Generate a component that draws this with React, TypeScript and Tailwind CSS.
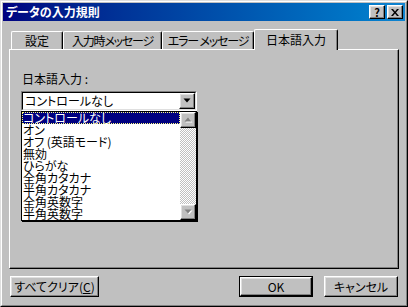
const font = "[font-family:'Noto_Sans_CJK_JP','Noto_Sans',sans-serif] [font-feature-settings:'palt']"

const items = ['コントロールなし', 'オン', 'オフ (英語モード)', '無効', 'ひらがな', '全角カタカナ', '半角カタカナ', '全角英数字', '半角英数字']

const raised = 'border border-t-white border-l-white border-r-black border-b-black shadow-[inset_-1px_-1px_#808080,inset_1px_1px_#dfdfdf]'

function Arrow({ dir, disabled }: { dir: 'up' | 'down'; disabled?: boolean }) {
  const pts = dir === 'down' ? '0,0 7,0 3.5,4' : '3.5,0 7,4 0,4'
  return (
    <svg width="9" height="6" viewBox="0 0 9 6">
      {disabled && <polygon points={pts} transform="translate(1.5,1.5)" fill="#ffffff" />}
      <polygon points={pts} transform="translate(0.5,0.5)" fill={disabled ? '#808080' : '#000000'} />
    </svg>
  )
}

function Tab({ label, w, active, tight }: { label: string; w: string; active?: boolean; tight?: boolean }) {
  const track = tight ? 'tracking-[-1.2px]' : ''
  if (active) {
    return (
      <div className={`${w} ${track} relative z-10 -mb-[1px] -mx-[2px] h-[21px] pt-[2px] text-center whitespace-nowrap bg-[#c0c0c0] border-t border-l border-r border-t-white border-l-white border-r-black shadow-[inset_-1px_0_#808080] rounded-t-[2px] text-[12px] leading-[16px] text-black`}>
        {label}
      </div>
    )
  }
  return (
    <div className={`${w} ${track} h-[18px] pt-[1px] text-center whitespace-nowrap border-t border-l border-r border-t-white border-l-white border-r-black shadow-[inset_-1px_0_#808080] rounded-t-[2px] text-[12px] leading-[16px] text-black`}>
      {label}
    </div>
  )
}

function Button({ children, w, def }: { children: React.ReactNode; w: string; def?: boolean }) {
  return (
    <div className={`${w} h-[21px] ${def ? 'border border-black' : ''}`}>
      <div className={`${raised} h-full w-full flex items-center justify-center text-[12px] leading-[14px] text-black bg-[#c0c0c0]`}>
        {children}
      </div>
    </div>
  )
}

export default function App() {
  return (
    <div className={`${font} w-[408px] h-[307px] bg-[#c0c0c0] border border-t-[#dfdfdf] border-l-[#dfdfdf] border-r-black border-b-black`}>
      <div className="h-full border border-t-white border-l-white border-r-[#808080] border-b-[#808080] p-[1px] flex flex-col">
        {/* title bar */}
        <div className="h-[18px] flex items-center justify-between pl-[3px] pr-[2px] bg-gradient-to-r from-[#000080] to-[#1084d0]">
          <span className="text-white font-bold text-[12px] leading-[14px]">データの入力規則</span>
          <div className="flex gap-[2px]">
            <div className={`${raised} w-[16px] h-[14px] bg-[#c0c0c0] flex items-center justify-center text-[11px] leading-[11px] font-bold text-black`}>?</div>
            <div className={`${raised} w-[16px] h-[14px] bg-[#c0c0c0] flex items-center justify-center`}>
              <svg width="8" height="7" viewBox="0 0 8 7">
                <path d="M0 0h2l2 2.5L6 0h2L5 3.5 8 7H6L4 4.5 2 7H0l3-3.5z" fill="#000" />
              </svg>
            </div>
          </div>
        </div>

        <div className="px-[6px] pt-[8px]">
          {/* tabs */}
          <div className="flex items-end h-[20px] pl-[2px]">
            <Tab label="設定" w="w-[52px]" />
            <Tab label="入力時メッセージ" w="w-[99px]" tight />
            <Tab label="エラー メッセージ" w="w-[92px]" tight />
            <div className="w-[2px]" />
            <Tab label="日本語入力" w="w-[84px]" active />
          </div>
          {/* panel */}
          <div className="h-[220px] border border-t-white border-l-white border-r-black border-b-black shadow-[inset_-1px_-1px_#808080] pl-[11px] pt-[22px]">
            <div className="pl-[1px] text-[12px] leading-[14px] text-black">日本語入力 :</div>
            <div className="mt-[5px] w-[176px]">
              {/* combobox */}
              <div className="h-[20px] border border-t-[#808080] border-l-[#808080] border-r-white border-b-white">
                <div className="h-full border border-t-black border-l-black border-r-[#dfdfdf] border-b-[#dfdfdf] bg-white flex items-center">
                  <span className="flex-1 pl-[2px] text-[12px] leading-[14px] text-black">コントロールなし</span>
                  <div className={`${raised} w-[16px] h-[16px] bg-[#c0c0c0] flex items-center justify-center`}>
                    <Arrow dir="down" />
                  </div>
                </div>
              </div>
              {/* dropdown list */}
              <div className="border border-black shadow-[1px_1px_0_#000] bg-white flex">
                <div className="flex-1 flex flex-col">
                  {items.map((it, i) => (
                    <div
                      key={it}
                      className={
                        i === 0
                          ? 'h-[12px] pl-[1px] text-[12px] leading-[12px] whitespace-nowrap bg-[#000080] text-white outline-1 outline-dotted outline-[#ffff80] -outline-offset-1'
                          : 'h-[12px] pl-[1px] text-[12px] leading-[12px] whitespace-nowrap text-black'
                      }
                    >
                      {it}
                    </div>
                  ))}
                </div>
                <div className="w-[16px] flex flex-col bg-[repeating-conic-gradient(#c0c0c0_0_25%,#fff_0_50%)] bg-[length:2px_2px]">
                  <div className={`${raised} h-[16px] bg-[#c0c0c0] flex items-center justify-center`}>
                    <Arrow dir="up" disabled />
                  </div>
                  <div className="flex-1" />
                  <div className={`${raised} h-[16px] bg-[#c0c0c0] flex items-center justify-center`}>
                    <Arrow dir="down" disabled />
                  </div>
                </div>
              </div>
            </div>
          </div>
          {/* buttons */}
          <div className="flex items-center mt-[7px] pl-[1px] pr-[1px]">
            <Button w="w-[89px]">
              <span>すべてクリア(<span className="underline">C</span>)</span>
            </Button>
            <div className="flex-1" />
            <Button w="w-[74px]" def>OK</Button>
            <div className="w-[11px]" />
            <Button w="w-[74px]">キャンセル</Button>
          </div>
        </div>
      </div>
    </div>
  )
}
